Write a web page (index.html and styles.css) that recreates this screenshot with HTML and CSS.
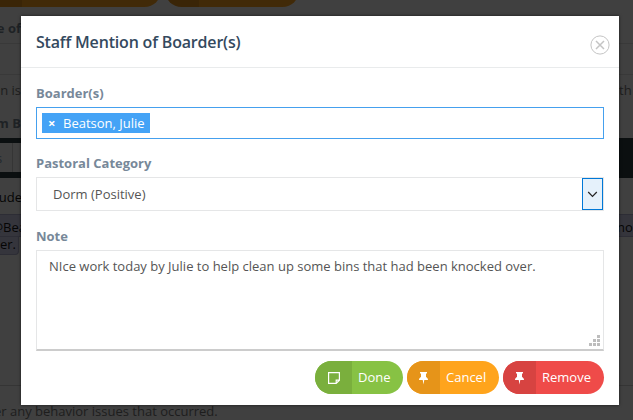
FILE: index.html
```html
<!DOCTYPE html>
<html lang="en">
<head>
<meta charset="utf-8">
<title>Staff Mention of Boarder(s)</title>
<link rel="stylesheet" href="styles.css">
</head>
<body>
<div class="page">
  <div class="page-actions"><i></i><i></i></div>
  <div class="row heading"><span class="left">e of</span></div>
  <div class="row field"></div>
  <div class="row help"><span class="left">en is</span><span class="right">th</span></div>
  <div class="row heading second"><span class="left">m B</span></div>
  <div class="toolbar"><div class="tool">s</div></div>
  <div class="row editor"><span class="left">ude</span></div>
  <div class="row mention"><span class="left">@Bea</span><span class="right">no</span></div>
  <div class="tail">er.</div>
  <div class="editor-end"></div>
  <div class="footer-help">er any behavior issues that occurred.</div>
</div>
<div class="modal">
  <header class="modal-header">
    <h1>Staff Mention of Boarder(s)</h1>
    <svg class="close" width="20" height="20" viewBox="0 0 20 20" fill="none" stroke="#c4c4c4"><circle cx="10" cy="10" r="9.1"/><path d="M6 6l8 8M14 6l-8 8" stroke-width="1.5"/></svg>
  </header>
  <div class="modal-body">
    <div class="label">Boarder(s)</div>
    <div class="tags"><span class="tag"><b>×</b>Beatson, Julie</span></div>
    <div class="label">Pastoral Category</div>
    <div class="select"><span>Dorm (Positive)</span><div class="arrow"><svg width="11" height="7" viewBox="0 0 11 7" fill="none" stroke="#222" stroke-width="1.2"><path d="M1.200 1l4.300 4.300L9.800 1"/></svg></div></div>
    <div class="label">Note</div>
    <div class="note"><span>NIce work today by Julie to help clean up some bins that had been knocked over.</span>
      <svg class="grip" width="11" height="11" viewBox="0 0 11 11" fill="#bdbdbd"><path d="M8 0h3v3H8zM4 4h3v3H4zM8 4h3v3H8zM0 8h3v3H0zM4 8h3v3H4zM8 8h3v3H8z"/></svg>
    </div>
    <div class="buttons">
      <div class="btn done"><span class="icon"><svg width="12" height="12" viewBox="0 0 12 12" fill="none" stroke="#fff" stroke-width="1.2"><path d="M.6.6h10.800v7.600l-3.200 3.200H.6zM11.400 8.200H8.200v3.200"/></svg></span><span>Done</span></div>
      <div class="btn cancel"><span class="icon"><svg width="9" height="13" viewBox="0 0 9 13" fill="#fff"><path d="M1 0h7v1.600H7V5c1.200.6 2 1.500 2 3H5.300l-.8 4.500L3.700 8H0c0-1.500.8-2.400 2-3V1.600H1z"/></svg></span><span>Cancel</span></div>
      <div class="btn remove"><span class="icon"><svg width="9" height="13" viewBox="0 0 9 13" fill="#fff"><path d="M1 0h7v1.600H7V5c1.200.6 2 1.500 2 3H5.300l-.8 4.500L3.700 8H0c0-1.500.8-2.400 2-3V1.600H1z"/></svg></span><span>Remove</span></div>
    </div>
  </div>
</div>
</body>
</html>
```
FILE: styles.css
```css
* { box-sizing: border-box; }
body { margin: 0; width: 633px; height: 420px; overflow: hidden; position: relative; background: #404040; font: 13px/18px "Open Sans", "Noto Sans", sans-serif; color: #555; }

.page { color: #1d1d1d; white-space: nowrap; }
.page-actions { display: flex; gap: 8px; height: 7px; overflow: hidden; margin-bottom: 12px; }
.page-actions i { flex: none; height: 33px; margin-top: -26px; border-radius: 17px; width: 134px; background: linear-gradient(90deg, #3a2507 34px, #412a08 34px); }
.page-actions i:first-child { width: 161px; margin-right: -4px; border-radius: 0 17px 17px 0; background: linear-gradient(90deg, #3a2507 22px, #412a08 22px); }
.row { display: flex; justify-content: space-between; }
.left { width: 21px; display: flex; justify-content: flex-end; }
.right { width: 14px; }
.heading { height: 25px; border-bottom: 1px solid #393939; font-weight: 700; color: #1e2225; }
.field { height: 31px; border-bottom: 1px solid #393939; }
.help { height: 39px; padding-top: 6px; }
.heading.second { height: 24px; border: 0; }
.toolbar { height: 40px; padding: 5px 0 6px; background: #0b0f10; }
.tool { display: flex; align-items: center; width: 21px; height: 29px; background: linear-gradient(90deg, #404040 12px, #353535 12px, #353535 13px, #404040 13px); color: #20282e; text-indent: -4px; }
.editor { height: 36px; padding-top: 10px; color: #050505; }
.editor .left { width: 22px; }
.mention { height: 23px; padding-top: 3px; background: #35353c; border: 1px solid #2d2d35; border-width: 1px 0; color: #050505; }
.mention .left { width: 26px; }
.mention .right { width: 16px; }
.tail { width: 19px; height: 18px; line-height: 15px; background: #35353c; border: 1px solid #2d2d35; border-width: 0 1px 1px 0; border-radius: 0 0 4px 0; color: #050505; }
.editor-end { height: 131px; border-bottom: 1px solid #353535; }
.footer-help { padding-top: 16px; margin-left: -6px; }

.modal { position: absolute; left: 21px; top: 16px; width: 598px; height: 389px; background: #fff; box-shadow: 0 0 3px rgba(0,0,0,.6); }
.modal-header { display: flex; justify-content: space-between; height: 52px; padding: 15px 9px 0 15px; border-bottom: 1px solid #e9ebec; }
h1 { margin: 0; font-size: 16px; line-height: 22px; font-weight: 600; letter-spacing: -.18px; color: #34495e; }
.close { margin-top: 4px; }
.modal-body { padding: 16px 15px 0; }
.label { height: 23px; font-weight: 700; color: #778899; }
.tags { height: 32px; margin-bottom: 15px; padding: 5px; border: 1px solid #45a0ee; }
.tag { display: flex; align-items: center; width: 108px; height: 20px; padding-left: 6px; background: #44a3f6; color: #fff; white-space: nowrap; }
.tag b { width: 15px; flex: none; font-size: 13px; }
.select { display: flex; justify-content: space-between; align-items: center; height: 34px; margin-bottom: 16px; padding-left: 16px; border: 1px solid #e5e6e7; }
.arrow { display: flex; align-items: center; justify-content: center; width: 21px; height: 32px; border: 1px solid #0078d7; background: #e5f1fb; }
.note { display: flex; justify-content: space-between; height: 101px; padding: 6px 3px 3px 12px; border: 1px solid #e5e6e7; border-bottom: 2px solid #ccc; }
.grip { align-self: flex-end; }
.buttons { display: flex; justify-content: flex-end; gap: 4px; margin-top: 10px; }
.btn { display: flex; height: 33px; line-height: 33px; border-radius: 17px; overflow: hidden; color: #fff; width: 88px; background: #87c244; }
.icon { display: flex; align-items: center; justify-content: center; flex: none; width: 37px; margin-right: 6px; background: #7aaf3d; }
.cancel { width: 92px; background: #ffa41c; }
.cancel .icon { width: 33px; padding-top: 1px; background: #e69419; }
.remove { width: 101px; background: #ef4b49; }
.remove .icon { width: 33px; padding-top: 1px; background: #d74341; }
```
